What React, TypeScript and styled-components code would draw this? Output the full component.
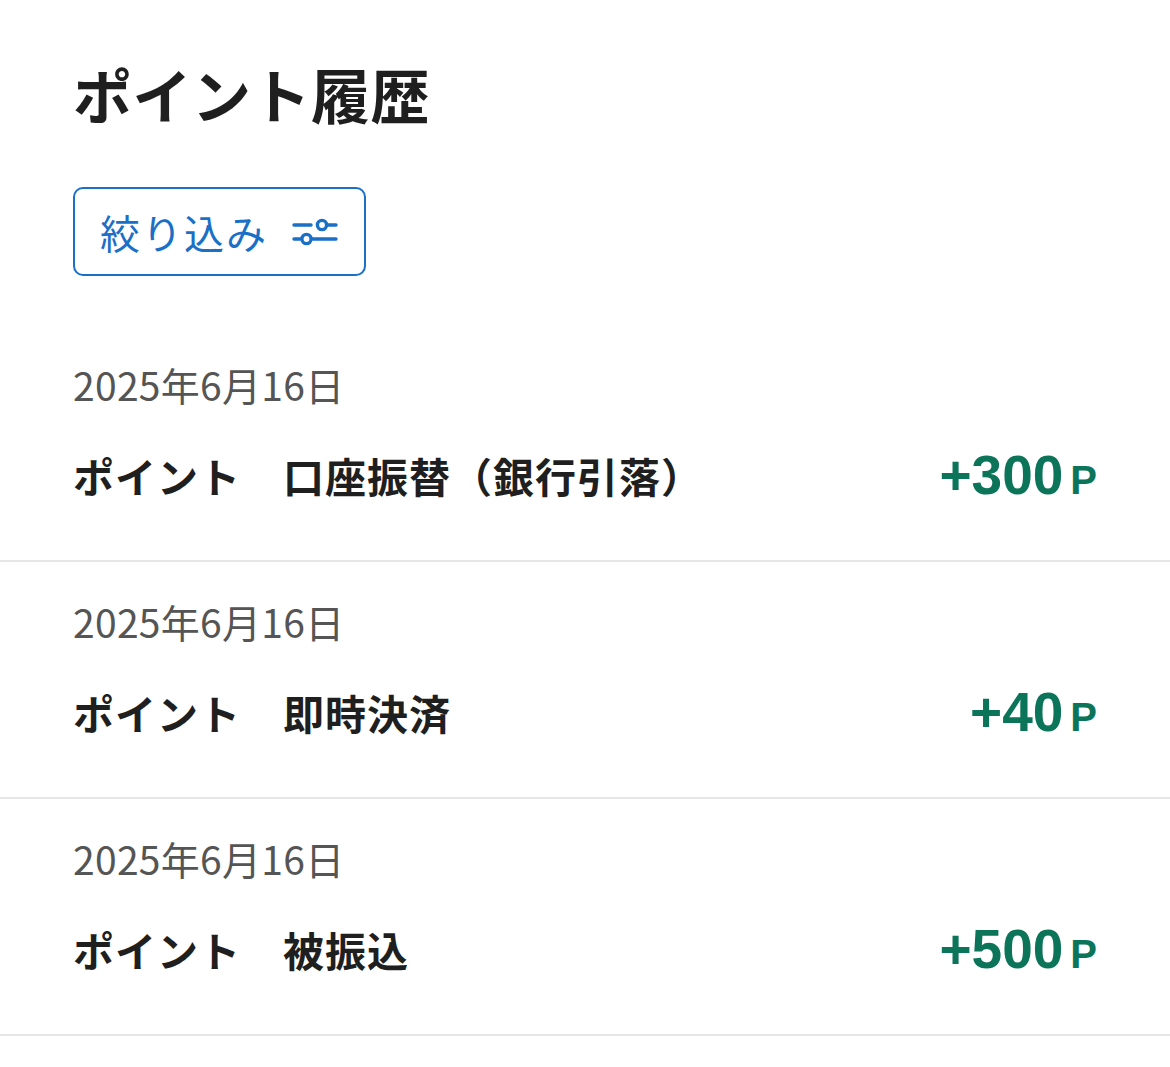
import React, { FC } from "react";
import styled, { createGlobalStyle } from "styled-components";

type HistoryItem = {
  date: string;
  label: string;
  detail: string;
  amount: number;
};

const items: HistoryItem[] = [
  { date: "2025年6月16日", label: "ポイント", detail: "口座振替（銀行引落）", amount: 300 },
  { date: "2025年6月16日", label: "ポイント", detail: "即時決済", amount: 40 },
  { date: "2025年6月16日", label: "ポイント", detail: "被振込", amount: 500 },
];

const GlobalStyle = createGlobalStyle`
  body {
    margin: 0;
    background: #ffffff;
    font-family: "Noto Sans CJK JP", "Noto Sans", sans-serif;
    color: #1f1f1f;
  }
`;

const Page = styled.div`
  display: flex;
  flex-direction: column;
`;

const Header = styled.header`
  padding: 54px 73px 0;
  display: flex;
  flex-direction: column;
  align-items: flex-start;
`;

const Title = styled.h1`
  margin: 0;
  font-size: 59px;
  line-height: 80px;
  font-weight: 700;
  letter-spacing: 0.5px;
  color: #1f1f1f;
`;

const FilterButton = styled.button`
  margin-top: 53px;
  height: 89px;
  width: 293px;
  box-sizing: border-box;
  border: 2.5px solid #1a6fc6;
  border-radius: 10px;
  background: #fff;
  color: #1a6fc6;
  display: flex;
  align-items: center;
  gap: 24px;
  padding: 0 0 0 25px;
  font-family: "Noto Sans CJK JP", sans-serif;
  font-size: 40px;
  font-weight: 400;
  letter-spacing: 2px;
  cursor: pointer;
`;

const List = styled.ul`
  list-style: none;
  margin: 49px 0 0;
  padding: 0;
`;

const Row = styled.li`
  padding: 38px 73px 60px;
  border-bottom: 2.5px solid #e6e6e6;
  display: flex;
  flex-direction: column;
  gap: 45px;
`;

const DateText = styled.div`
  font-size: 39px;
  line-height: 42px;
  letter-spacing: 0.3px;
  color: #555555;
  font-weight: 400;
`;

const Line = styled.div`
  display: flex;
  align-items: center;
  justify-content: space-between;
  height: 50px;
`;

const Label = styled.div`
  font-size: 41px;
  font-weight: 700;
  letter-spacing: 1px;
  color: #1f1f1f;
  line-height: 50px;
  white-space: pre;
`;

const Amount = styled.div`
  display: flex;
  align-items: baseline;
  gap: 7px;
  color: #0c7559;
  font-family: "Liberation Sans", Arial, sans-serif;
  font-weight: 700;
`;

const AmountValue = styled.span`
  font-size: 55px;
  letter-spacing: 0px;
`;

const Unit = styled.span`
  font-size: 40px;
`;

// horizontal filter sliders: knob right on top, knob left below
const SlidersIcon: FC = () => (
  <svg width="46" height="28" viewBox="0 0 46 28" fill="none" stroke="currentColor" strokeWidth="3.4" strokeLinecap="round">
    <line x1="2" y1="7" x2="19" y2="7" />
    <circle cx="30" cy="7" r="4.6" />
    <line x1="36" y1="7" x2="44" y2="7" />
    <line x1="2" y1="21" x2="8" y2="21" />
    <circle cx="14.5" cy="21" r="4.6" />
    <line x1="21" y1="21" x2="44" y2="21" />
  </svg>
);

const App: FC = () => (
  <Page>
    <GlobalStyle />
    <Header>
      <Title>ポイント履歴</Title>
      <FilterButton>
        絞り込み
        <SlidersIcon />
      </FilterButton>
    </Header>
    <List>
      {items.map((item, i) => (
        <Row key={i}>
          <DateText>{item.date}</DateText>
          <Line>
            <Label>
              {item.label}　{item.detail}
            </Label>
            <Amount>
              <AmountValue>+{item.amount}</AmountValue>
              <Unit>P</Unit>
            </Amount>
          </Line>
        </Row>
      ))}
    </List>
  </Page>
);

export default App;
